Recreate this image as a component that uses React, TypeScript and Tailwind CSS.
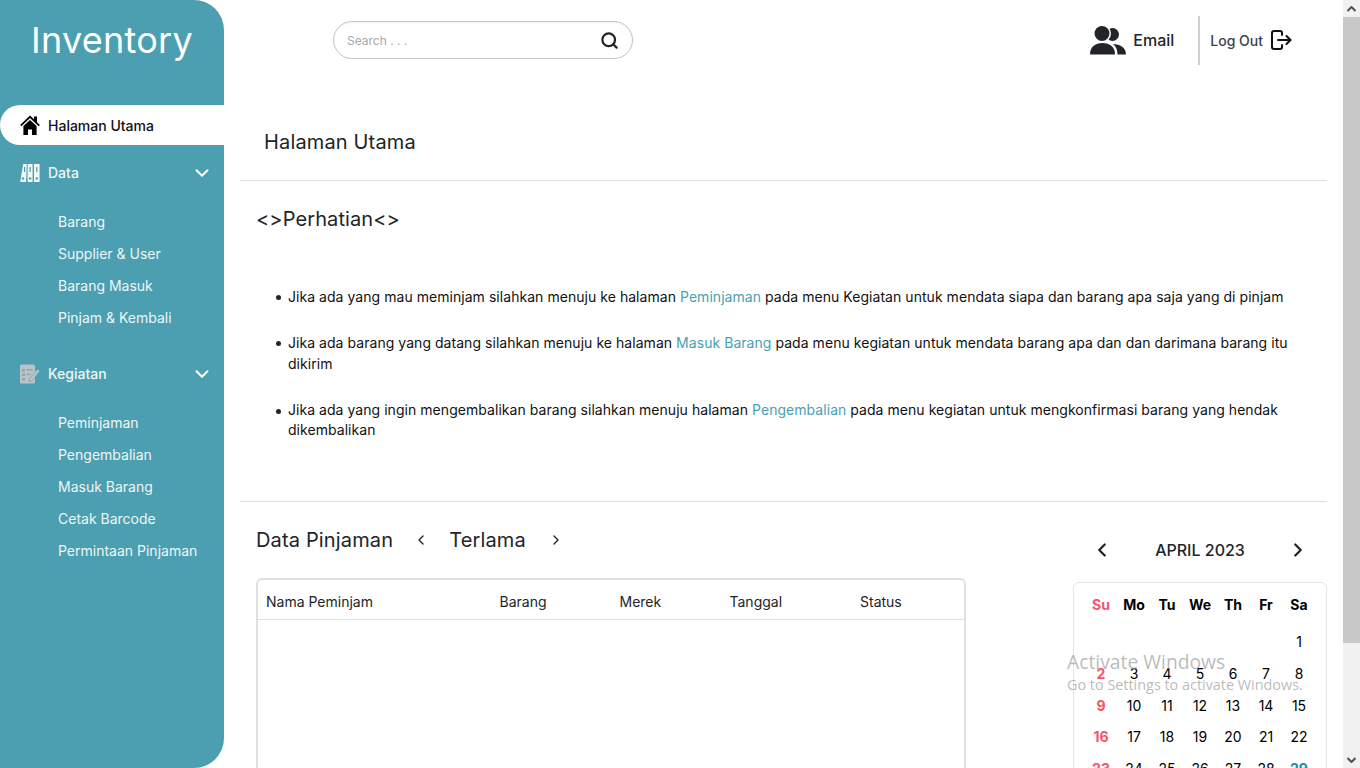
import React from "react";
import { ChevronDown, ChevronLeft, ChevronRight, Search } from "lucide-react";

const dataMenu = ["Barang", "Supplier & User", "Barang Masuk", "Pinjam & Kembali"];
const kegiatanMenu = ["Peminjaman", "Pengembalian", "Masuk Barang", "Cetak Barcode", "Permintaan Pinjaman"];
const days = ["Su", "Mo", "Tu", "We", "Th", "Fr", "Sa"];
const weeks = [
  ["", "", "", "", "", "", "1"],
  ["2", "3", "4", "5", "6", "7", "8"],
  ["9", "10", "11", "12", "13", "14", "15"],
  ["16", "17", "18", "19", "20", "21", "22"],
  ["23", "24", "25", "26", "27", "28", "29"],
];
const columns = [
  { label: "Nama Peminjam", cls: "w-[233.5px]" },
  { label: "Barang", cls: "w-[120px]" },
  { label: "Merek", cls: "w-[110px]" },
  { label: "Tanggal", cls: "w-[130.5px]" },
  { label: "Status", cls: "w-[90px]" },
];

const HomeIcon = () => (
  <svg width="20" height="20" viewBox="0 0 20 20" className="shrink-0">
    <path d="M0.7 10.6L10 1.8l9.3 8.8" fill="none" stroke="#000" strokeWidth="1.8" />
    <rect x="14" y="1.5" width="3" height="5.5" fill="#000" />
    <path d="M3.4 11L10 4.9l6.6 6.1V20H12v-5.5H8V20H3.4z" fill="#000" />
  </svg>
);

const BinderIcon = () => (
  <svg width="20" height="20" viewBox="0 0 20 20" fill="#f2f7f8" className="shrink-0">
    <path d="M3.2 1h3.6L6 19H0.2z" />
    <rect x="7.6" y="1" width="5" height="18" rx="0.5" />
    <rect x="14" y="1" width="5.6" height="18" rx="0.5" />
    <g fill="#4b9fb0">
      <circle cx="3" cy="15.5" r="1.2" />
      <circle cx="10.1" cy="15.5" r="1.2" />
      <circle cx="16.8" cy="15.5" r="1.2" />
      <rect x="4" y="4" width="1.2" height="5" />
      <rect x="9.5" y="4" width="1.2" height="5" />
      <rect x="16.2" y="4" width="1.2" height="5" />
    </g>
  </svg>
);

const ChecklistIcon = () => (
  <svg width="20" height="20" viewBox="0 0 20 20" className="shrink-0">
    <rect x="0" y="0.5" width="15" height="19" rx="1.5" fill="#b9c4c6" />
    <g fill="#8fa6aa">
      <rect x="2" y="5" width="3" height="2.5" />
      <rect x="6.5" y="5" width="6" height="1.5" />
      <rect x="2" y="9.5" width="3" height="2.5" />
      <rect x="6.5" y="9.5" width="4" height="1.5" />
      <rect x="2" y="14" width="3" height="2.5" />
    </g>
    <path d="M9.5 14.5L17.5 5l2.3 2L12 16.7l-3.2 1.2z" fill="#b9c4c6" stroke="#4b9fb0" strokeWidth="0.5" />
  </svg>
);

const PeopleIcon = () => (
  <svg width="36" height="29" viewBox="0 0 36 29" fill="#212529" className="shrink-0">
    <circle cx="22.5" cy="8.5" r="6.5" />
    <circle cx="12" cy="7.5" r="9" fill="#fff" />
    <circle cx="12" cy="7.5" r="7.5" />
    <path d="M0 28.5C0 21 5 17 12.5 17S25 21 25 28.5z" />
    <path d="M23 18c7 0 13 3.5 13 10.5h-8.500C27.500 24 26 20.500 23 18z" />
  </svg>
);

const LogoutIcon = () => (
  <svg width="22" height="20" viewBox="0 0 22 20" fill="none" stroke="#111" strokeWidth="2" strokeLinecap="round" strokeLinejoin="round" className="shrink-0">
    <path d="M12 5V3a2 2 0 0 0-2-2H4a2 2 0 0 0-2 2v14a2 2 0 0 0 2 2h6a2 2 0 0 0 2-2v-2" />
    <path d="M8 10h12.500" />
    <path d="M16.500 6l4 4-4 4" />
  </svg>
);

function Sidebar() {
  return (
    <aside className="w-[224px] h-full shrink-0 bg-[#4b9fb0] rounded-r-[30px] text-[#eef6f7] text-sm">
      <div className="h-[105px] pt-[16px] text-center text-[36px] leading-[48px] tracking-[0.25px] text-white">Inventory</div>
      <div className="h-[40px] bg-white rounded-l-full flex items-center pl-[20px] gap-[8px] text-[#111] font-medium">
        <HomeIcon />
        <span className="mt-[2px]">Halaman Utama</span>
      </div>
      <div className="h-[56px] flex items-center pl-[20px] pr-[11px] font-medium">
        <BinderIcon />
        <span className="ml-[8px] flex-1">Data</span>
        <ChevronDown size={22} strokeWidth={2.2} color="#fff" />
      </div>
      <div className="pl-[58px] pt-[5px]">
        {dataMenu.map((item) => (
          <div key={item} className="h-[32px] leading-[32px]">{item}</div>
        ))}
      </div>
      <div className="h-[56px] mt-[12px] flex items-center pl-[20px] pr-[11px] font-medium">
        <ChecklistIcon />
        <span className="ml-[8px] flex-1">Kegiatan</span>
        <ChevronDown size={22} strokeWidth={2.2} color="#fff" />
      </div>
      <div className="pl-[58px] pt-[5px]">
        {kegiatanMenu.map((item) => (
          <div key={item} className="h-[32px] leading-[32px]">{item}</div>
        ))}
      </div>
    </aside>
  );
}

function Topbar() {
  return (
    <header className="h-[80px] flex items-center">
      <div className="ml-[93px] w-[300px] h-[38px] rounded-full border border-[#c4c4c4] flex items-center pl-[13px] pr-[13px] shadow-[inset_0_1px_2px_rgba(0,0,0,0.06)]">
        <span className="flex-1 mt-[2px] text-xs text-[#a8a8a8]">Search . . .</span>
        <Search size={19} strokeWidth={2.8} color="#212529" />
      </div>
      <div className="ml-auto flex items-center mr-[35px]">
        <PeopleIcon />
        <span className="ml-[7px] text-base font-medium text-[#212529]">Email</span>
        <div className="ml-[24px] w-[2px] h-[49px] bg-[#cfcfcf]" />
        <span className="ml-[10px] mt-[2px] text-sm font-medium text-[#3a4250]">Log Out</span>
        <span className="ml-[7px]"><LogoutIcon /></span>
      </div>
    </header>
  );
}

function Bullet({ children, className }: { children: React.ReactNode; className?: string }) {
  return (
    <li className={"flex " + (className ?? "")}>
      <span className="w-[5px] h-[5px] mt-[9px] mr-[7px] rounded-full bg-[#212529] shrink-0" />
      <div>{children}</div>
    </li>
  );
}

function Notice() {
  return (
    <section className="h-[321px] border-b border-[#e0e0e0] pl-[16px] pr-[30px] text-[#111]">
      <h2 className="pt-[24px] text-xl leading-[28px] tracking-[0.1px] text-[#212529]">&lt;&gt;Perhatian&lt;&gt;</h2>
      <ul className="mt-[53px] pl-[20px] text-sm leading-[21px] tracking-[0.045px]">
        <Bullet>
          Jika ada yang mau meminjam silahkan menuju ke halaman <span className="text-[#4b9fb0]">Peminjaman</span> pada menu Kegiatan untuk mendata siapa dan barang apa saja yang di pinjam
        </Bullet>
        <Bullet className="mt-[25px]">
          Jika ada barang yang datang silahkan menuju ke halaman <span className="text-[#4b9fb0]">Masuk Barang</span> pada menu kegiatan untuk mendata barang apa dan dan darimana barang itu dikirim
        </Bullet>
        <Bullet className="mt-[25.5px] leading-[20px]">
          Jika ada yang ingin mengembalikan barang silahkan menuju halaman <span className="text-[#4b9fb0]">Pengembalian</span> pada menu kegiatan untuk mengkonfirmasi barang yang hendak dikembalikan
        </Bullet>
      </ul>
    </section>
  );
}

function LoanTable() {
  return (
    <div className="w-[710px]">
      <div className="h-[28px] mt-[24px] flex items-center text-xl tracking-[0.15px] text-[#212529]">
        <span>Data Pinjaman</span>
        <ChevronLeft size={16} strokeWidth={2} className="ml-[20px]" />
        <span className="ml-[20px]">Terlama</span>
        <ChevronRight size={16} strokeWidth={2} className="ml-[22px]" />
      </div>
      <div className="mt-[24px] h-[300px] border-2 border-[#e0e0e0] rounded-[6px]">
        <div className="h-[40px] border-b border-[#e0e0e0] flex items-center pl-[8px] pt-[4px] text-sm text-[#212529]">
          {columns.map((c) => (
            <div key={c.label} className={c.cls}>{c.label}</div>
          ))}
        </div>
      </div>
    </div>
  );
}

function Calendar() {
  return (
    <div className="w-[254px]">
      <div className="h-[28px] mt-[34px] flex items-center justify-between px-[18px] text-base font-medium text-[#212529]">
        <ChevronLeft size={22} strokeWidth={2.5} />
        <span>APRIL 2023</span>
        <ChevronRight size={22} strokeWidth={2.5} />
      </div>
      <div className="mt-[18px] h-[300px] border border-[#e2e4ec] rounded-[6px] pt-[10px] pl-[10.5px] text-sm text-[#000]">
        <div className="flex h-[24px] items-center font-bold">
          {days.map((d, i) => (
            <div key={d} className={i === 0 ? "w-[33px] text-center text-[#f7536a]" : "w-[33px] text-center"}>{d}</div>
          ))}
        </div>
        <div className="mt-[9.2px]">
          {weeks.map((week, w) => (
            <div key={w} className="flex h-[31.75px] items-center">
              {week.map((d, i) => (
                <div
                  key={i}
                  className={
                    i === 0
                      ? "w-[33px] text-center font-bold text-[#f7536a]"
                      : d === "29"
                        ? "w-[33px] text-center font-bold text-[#1c8fb5]"
                        : "w-[33px] text-center"
                  }
                >
                  {d}
                </div>
              ))}
            </div>
          ))}
        </div>
      </div>
    </div>
  );
}

function Scrollbar() {
  return (
    <div className="w-[17px] h-full shrink-0 bg-[#f1f1f1] flex flex-col">
      <div className="h-[17px] flex items-center justify-center">
        <svg width="9" height="6" viewBox="0 0 9 6" fill="none" stroke="#505050" strokeWidth="2"><path d="M0.5 5L4.5 1l4 4" /></svg>
      </div>
      <div className="h-[626px] bg-[#c8c8c8]" />
      <div className="flex-1" />
      <div className="h-[17px] flex items-center justify-center">
        <svg width="9" height="6" viewBox="0 0 9 6" fill="none" stroke="#505050" strokeWidth="2"><path d="M0.5 1L4.5 5l4-4" /></svg>
      </div>
    </div>
  );
}

export default function App() {
  return (
    <div className="relative w-[1360px] h-[768px] overflow-hidden flex bg-white font-['Inter',sans-serif]">
      <Sidebar />
      <main className="flex-1 min-w-0 px-[16px]">
        <Topbar />
        <div className="h-[101px] border-b border-[#e0e0e0] pl-[24px] pt-[48px] text-xl leading-[28px] tracking-[0.15px] text-[#212529]">Halaman Utama</div>
        <Notice />
        <div className="flex justify-between pl-[16px]">
          <LoanTable />
          <Calendar />
        </div>
      </main>
      <Scrollbar />
      {/* watermark */}
      <div className="absolute left-[1067px] top-[649px] text-[#9d9d9d]/70 font-['Open_Sans',sans-serif] pointer-events-none">
        <div className="text-[19.3px] leading-[26px]">Activate Windows</div>
        <div className="text-[14.4px] leading-[20px]">Go to Settings to activate Windows.</div>
      </div>
    </div>
  );
}
